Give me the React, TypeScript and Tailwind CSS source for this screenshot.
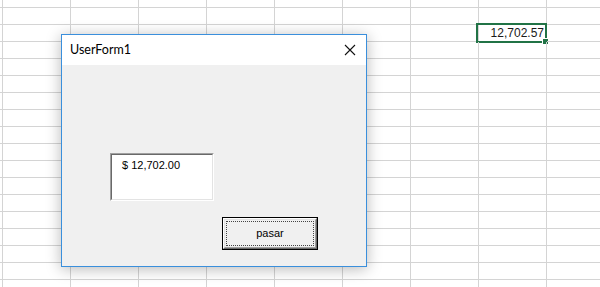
import React from "react";

const ROWS = 17;
const COLS = 9;

function SheetGrid() {
  return (
    <div className="flex flex-col">
      {/* partial top row */}
      <div className="flex h-[8px]">
        <div className="w-[3px] shrink-0 border-r border-b border-[#d4d4d4]" />
        {Array.from({ length: COLS }).map((_, c) => (
          <div key={c} className="w-[68px] shrink-0 border-r border-b border-[#d4d4d4]" />
        ))}
      </div>
      {Array.from({ length: ROWS }).map((_, r) => (
        <div key={r} className="flex h-[17px]">
          <div className="w-[3px] shrink-0 border-r border-b border-[#d4d4d4]" />
          {Array.from({ length: COLS }).map((_, c) => {
            const active = r === 1 && c === 7;
            return (
              <div
                key={c}
                className="relative w-[68px] shrink-0 border-r border-b border-[#d4d4d4]"
              >
                {active && (
                  <div className="absolute -left-[3px] -top-[2px] h-[20px] w-[71px] border-2 border-[#217346]">
                    <div className="flex h-full items-center justify-end pr-[1px] font-['Liberation_Sans',sans-serif] text-[12px] leading-none text-[#1a1a1a]">
                      12,702.57
                    </div>
                    <div className="absolute -bottom-[3px] -right-[3px] h-[5px] w-[5px] bg-[#217346] ring-1 ring-white" />
                  </div>
                )}
              </div>
            );
          })}
        </div>
      ))}
    </div>
  );
}

function TextBox() {
  return (
    <div className="h-[48px] w-[104px] border border-t-[#a0a0a0] border-l-[#a0a0a0] border-r-white border-b-white">
      <div className="h-full w-full border border-t-[#696969] border-l-[#696969] border-r-[#e3e3e3] border-b-[#e3e3e3] bg-white pl-[10px] pt-[4px] font-['Liberation_Sans',sans-serif] text-[11px] leading-[13px] text-black">
        $ 12,702.00
      </div>
    </div>
  );
}

function PasarButton() {
  return (
    <div className="h-[33px] w-[96px] border border-black">
      <div className="h-full w-full border border-t-white border-l-white border-r-[#696969] border-b-[#696969]">
        <div className="flex h-full w-full items-center justify-center border border-t-[#e3e3e3] border-l-[#e3e3e3] border-r-[#a0a0a0] border-b-[#a0a0a0] bg-[#f0f0f0] p-[1px]">
          <div className="flex h-full w-full items-center justify-center border border-dotted border-[#444] font-['Liberation_Sans',sans-serif] text-[11px] text-black">
            pasar
          </div>
        </div>
      </div>
    </div>
  );
}

export default function App() {
  return (
    <div className="relative h-[287px] w-[600px] overflow-hidden bg-white">
      <SheetGrid />

      {/* UserForm window */}
      <div className="absolute left-[61px] top-[34px] flex h-[233px] w-[306px] flex-col border border-[#3a8fdc] bg-[#f0f0f0] shadow-[0_2px_14px_rgba(0,0,0,0.28)]">
        <div className="flex h-[30px] shrink-0 items-center justify-between bg-white pl-[8px] pr-[10px]">
          <span className="font-['Lato',sans-serif] text-[12.5px] text-black">UserForm1</span>
          <svg width="12" height="12" viewBox="0 0 12 12" className="text-[#111]">
            <path d="M1 1 L11 11 M11 1 L1 11" stroke="currentColor" strokeWidth="1.1" fill="none" />
          </svg>
        </div>
        <div className="flex flex-col pl-[48px] pt-[88px]">
          <TextBox />
          <div className="ml-[112px] mt-[16px]">
            <PasarButton />
          </div>
        </div>
      </div>
    </div>
  );
}
